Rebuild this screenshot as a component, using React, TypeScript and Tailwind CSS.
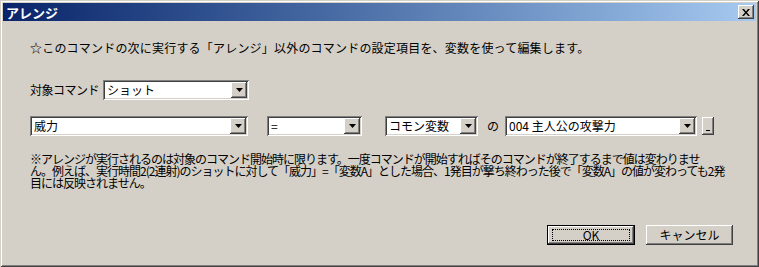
import React from "react";

const sunken =
  "shadow-[inset_1px_1px_0_#808080,inset_-1px_-1px_0_#ffffff,inset_2px_2px_0_#404040,inset_-2px_-2px_0_#d4d0c8]";
const raised =
  "shadow-[inset_-1px_-1px_0_#404040,inset_1px_1px_0_#ffffff,inset_-2px_-2px_0_#808080,inset_2px_2px_0_#d4d0c8]";

function ArrowButton() {
  return (
    <div className={`flex h-[16px] w-[16px] items-center justify-center bg-[#d4d0c8] ${raised}`}>
      <svg width="7" height="4" viewBox="0 0 7 4">
        <path d="M0 0h7L3.5 4z" fill="#000" />
      </svg>
    </div>
  );
}

function Combo({ text, className }: { text: string; className: string }) {
  return (
    <div className={`flex h-[20px] items-center justify-between bg-white p-[2px] ${sunken} ${className}`}>
      <span className="pl-[2px] text-[12px] leading-none text-black">{text}</span>
      <ArrowButton />
    </div>
  );
}

export default function App() {
  return (
    <div
      className="flex h-[267px] w-[759px] flex-col bg-[#d4d0c8] p-[3px] shadow-[inset_1px_1px_0_#d4d0c8,inset_-1px_-1px_0_#404040,inset_2px_2px_0_#ffffff,inset_-2px_-2px_0_#808080]"
      style={{ fontFamily: '"MS UI Gothic", "Noto Sans CJK JP", sans-serif' }}
    >
      {/* title bar */}
      <div className="flex h-[18px] items-center justify-between bg-gradient-to-r from-[#0a246a] to-[#a6caf0] pl-[3px] pr-[2px]">
        <span className="text-[13px] font-bold leading-none text-white">アレンジ</span>
        <div className={`flex h-[14px] w-[16px] items-center justify-center bg-[#d4d0c8] ${raised}`}>
          <svg width="8" height="7" viewBox="0 0 8 7">
            <path d="M0 0h2l2 2.5L6 0h2L5 3.5 8 7H6L4 4.5 2 7H0l3-3.5z" fill="#000" />
          </svg>
        </div>
      </div>

      <div className="flex flex-1 flex-col pl-[27px] text-[12px] leading-[12px] text-black">
        <p className="mt-[21px] whitespace-nowrap tracking-[0.2px]">
          ☆このコマンドの次に実行する「アレンジ」以外のコマンドの設定項目を、変数を使って編集します。
        </p>

        <div className="mt-[26px] flex items-center">
          <span className="w-[73px] whitespace-nowrap tracking-[-0.5px]">対象コマンド</span>
          <Combo text="ショット" className="w-[146px]" />
        </div>

        <div className="mt-[16px] flex items-center">
          <Combo text="威力" className="w-[218px]" />
          <Combo text="=" className="ml-[19px] w-[95px]" />
          <Combo text="コモン変数" className="ml-[23px] w-[93px]" />
          <span className="ml-[9px] w-[18px]">の</span>
          <Combo text="004 主人公の攻撃力" className="w-[192px]" />
          <div className={`ml-[5px] flex h-[18px] w-[12px] items-end justify-center bg-[#d4d0c8] pb-[4px] ${raised}`}>
            <div className="h-[1px] w-[4px] bg-black" />
          </div>
        </div>

        <p className="mt-[17px] whitespace-nowrap tracking-[-1px]">
          ※アレンジが実行されるのは対象のコマンド開始時に限ります。一度コマンドが開始すればそのコマンドが終了するまで値は変わりませ
          <br />
          ん。例えば、実行時間2(2連射)のショットに対して「威力」=「変数A」とした場合、1発目が撃ち終わった後で「変数A」の値が変わっても2発
          <br />
          目には反映されません。
        </p>

        <div className="mt-auto mb-[19px] flex justify-end pr-[23px]">
          <div className="flex h-[20px] w-[88px] items-center justify-center border border-black bg-[#d4d0c8] shadow-[inset_-1px_-1px_0_#404040,inset_1px_1px_0_#ffffff,inset_-2px_-2px_0_#808080]">
            <div className="flex h-[12px] w-[78px] items-center justify-center border border-dotted border-black">
              OK
            </div>
          </div>
          <div className={`ml-[11px] flex h-[20px] w-[87px] items-center justify-center bg-[#d4d0c8] ${raised}`}>
            キャンセル
          </div>
        </div>
      </div>
    </div>
  );
}
